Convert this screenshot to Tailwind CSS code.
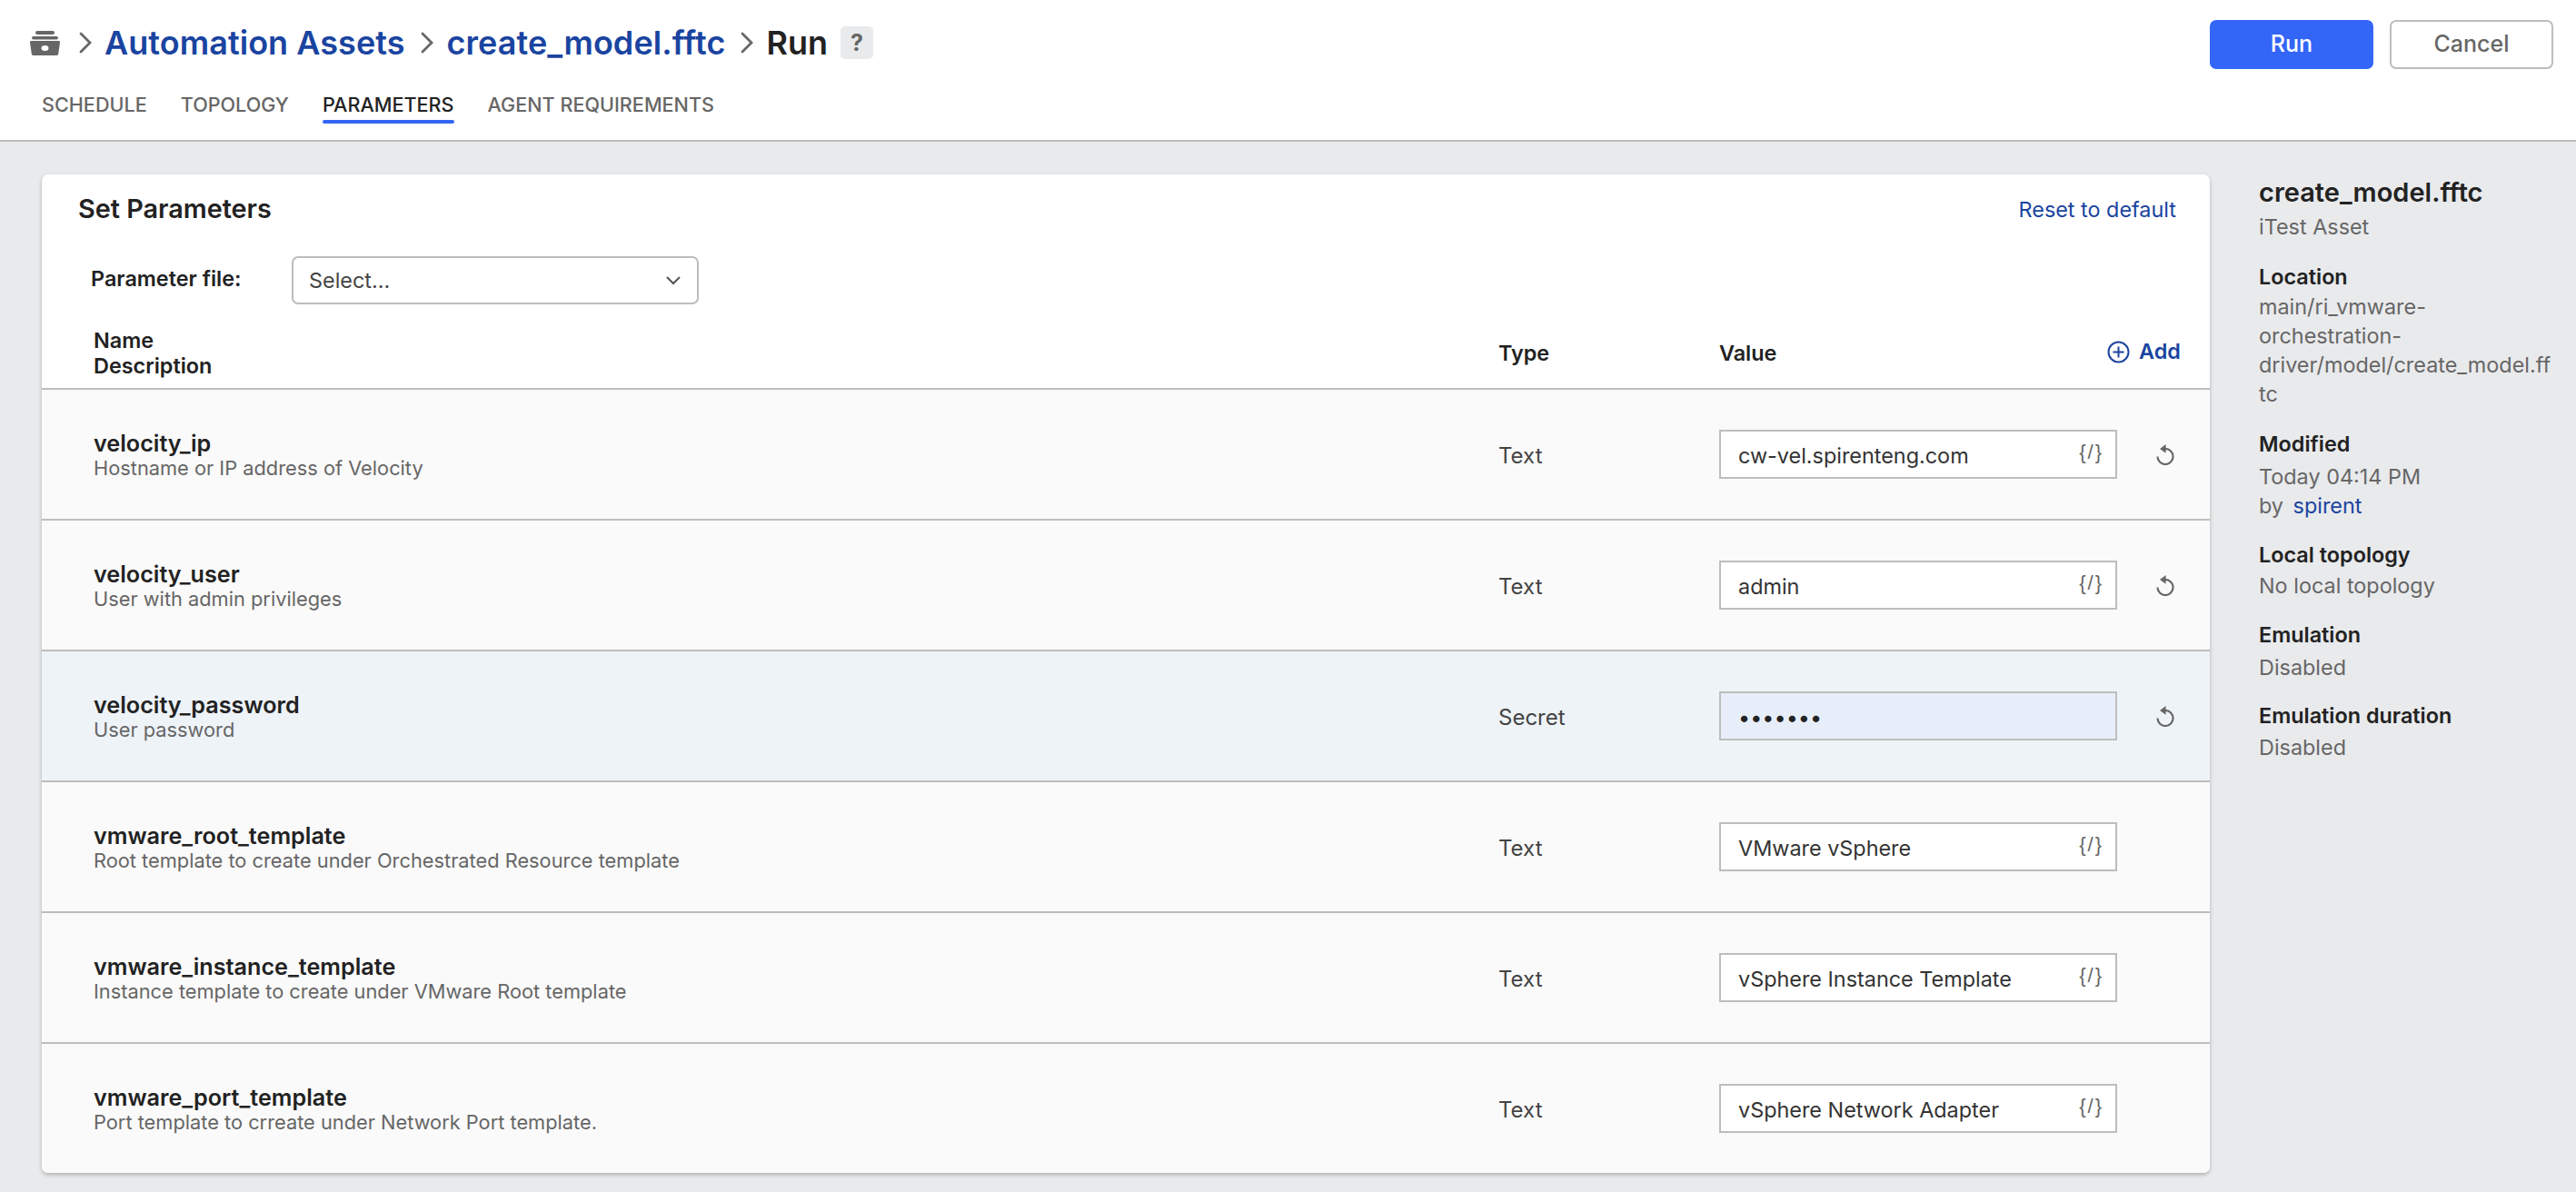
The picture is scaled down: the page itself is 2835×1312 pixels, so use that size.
<!DOCTYPE html>
<html>
<head>
<meta charset="utf-8">
<script src="https://cdn.jsdelivr.net/npm/@tailwindcss/browser@4"></script>
<title>Run</title>
</head>
<body class="bg-[#e9eaec] font-['Inter',sans-serif] text-[#222222] w-[2835px] h-[1312px] overflow-hidden">
<header class="h-[156px] bg-white border-b-2 border-[#bdbdbd] flex flex-col">
  <div class="flex items-center justify-between h-[94px] pl-[33px] pr-[25px]">
    <div class="flex items-center text-[36px] font-semibold leading-none">
      <svg class="w-[33px] h-[27px]" viewBox="0 0 33 27" fill="#666666"><rect x="6" y="0" width="21" height="4" rx="2"/><rect x="2" y="6" width="29" height="3.500" rx="1.750"/><path d="M1.500 11h30a1.500 1.500 0 0 1 1.500 1.700l-1.800 12.800a1.700 1.700 0 0 1-1.700 1.500h-26a1.700 1.700 0 0 1-1.700-1.500L0 12.700A1.500 1.500 0 0 1 1.500 11z"/><ellipse cx="16.500" cy="19" rx="4" ry="3" fill="#fff"/></svg>
      <svg class="w-[14px] h-[24px] ml-[21px] mr-[14px]" viewBox="0 0 14 24" fill="none" stroke="#666666" stroke-width="2.800" stroke-linecap="round"><path d="M2 2l10 10-10 10"/></svg>
      <a class="text-[#1a44a0] tracking-[0.05px]">Automation Assets</a>
      <svg class="w-[14px] h-[24px] ml-[17px] mr-[15px]" viewBox="0 0 14 24" fill="none" stroke="#666666" stroke-width="2.800" stroke-linecap="round"><path d="M2 2l10 10-10 10"/></svg>
      <a class="text-[#1a44a0] tracking-[0.05px]">create_model.fftc</a>
      <svg class="w-[14px] h-[24px] ml-[17px] mr-[14px]" viewBox="0 0 14 24" fill="none" stroke="#666666" stroke-width="2.800" stroke-linecap="round"><path d="M2 2l10 10-10 10"/></svg>
      <span>Run</span>
      <span class="ml-[14px] w-[36px] h-[36px] rounded-[5px] bg-[#e9eaec] text-[#666666] text-[25px] font-bold flex items-center justify-center">?</span>
    </div>
    <div class="flex items-center gap-[18px] mt-[4px]">
      <button class="w-[180px] h-[54px] rounded-[7px] bg-[#3366f6] text-white text-[25px] font-medium">Run</button>
      <button class="w-[180px] h-[54px] rounded-[7px] bg-white border-2 border-[#bdbdbd] text-[#666666] text-[25px] font-medium">Cancel</button>
    </div>
  </div>
  <nav class="flex gap-[37px] pl-[46px] pt-[7px] text-[21.6px] font-medium text-[#666666] leading-[28px]">
    <span>SCHEDULE</span>
    <span>TOPOLOGY</span>
    <span class="relative text-[#222222]">PARAMETERS<span class="absolute left-0 right-0 top-[31px] h-[4px] rounded-full bg-[#3366f6]"></span></span>
    <span>AGENT REQUIREMENTS</span>
  </nav>
</header>
<main class="flex pl-[46px] pt-[36px]">
  <section class="w-[2386px] h-[1099px] bg-white rounded-[7px] shadow-[0_2px_4px_rgba(0,0,0,0.25)] overflow-hidden flex flex-col">
    <div class="h-[235px]">
      <div class="flex items-start justify-between pl-[40px] pr-[37px] pt-[20px] h-[60px]">
        <h2 class="text-[28.8px] font-semibold leading-[36px]">Set Parameters</h2>
        <a class="text-[23.4px] text-[#1a44a0] leading-[36px] pt-[1px]">Reset to default</a>
      </div>
      <div class="flex items-center pl-[54px] mt-[30px]">
        <span class="w-[221px] text-[23.4px] font-semibold -mt-[3px]">Parameter file:</span>
        <div class="w-[448px] h-[53px] rounded-[7px] border-2 border-[#bdbdbd] flex items-center justify-between pl-[17px] pr-[18px] text-[23.4px] text-[#444444]">
          <span>Select...</span>
          <svg class="w-[16px] h-[10px]" viewBox="0 0 16 10" fill="none" stroke="#555555" stroke-width="2"><path d="M1 1l7 7 7-7"/></svg>
        </div>
      </div>
      <div class="grid grid-cols-[1603px_243px_438px_1fr] items-center mt-[26px] text-[23.4px] font-semibold leading-[28px]">
        <div class="pl-[57px]"><div>Name</div><div>Description</div></div>
        <div>Type</div>
        <div>Value</div>
        <div class="flex items-center text-[#1a44a0] font-semibold -mt-[4px]">
          <svg class="w-[25px] h-[25px] ml-[-11px] mr-[10px]" viewBox="0 0 25 25" fill="none" stroke="#1a44a0" stroke-width="2"><circle cx="12.500" cy="12.500" r="11"/><path d="M12.500 6.500v12M6.500 12.500h12"/></svg>
          Add
        </div>
      </div>
    </div>

    <div class="h-[144px] border-t-2 border-[#bdbdbd] bg-[#fafafa] grid grid-cols-[1603px_243px_438px_1fr] items-center">
      <div class="pl-[57px] mt-[4px]"><div class="text-[25.2px] font-semibold leading-[27px]">velocity_ip</div><div class="text-[21.8px] text-[#666666] leading-[27px]">Hostname or IP address of Velocity</div></div>
      <div class="text-[24px] text-[#444444] pt-[3px]">Text</div>
      <div class="h-[54px] border-2 border-[#bdbdbd] bg-white flex items-center justify-between pl-[19px] pr-[13px] text-[23.4px] text-[#333333]"><span class="pt-[3px]">cw-vel.spirenteng.com</span><span class="text-[#666666] text-[22px] tracking-[2px] font-['Liberation_Sans',sans-serif] -mt-[5px]">{/}</span></div>
      <div class="flex justify-center ml-[4px]"><svg class="w-[20px] h-[23px]" viewBox="0 0 18 21" fill="none" stroke="#666666" stroke-width="2"><path d="M9 4.500a7.800 7.800 0 1 1-7.800 7.800"/><path d="M9.500 0v9L3.500 4.500z" fill="#666666" stroke="none"/></svg></div>
    </div>
    <div class="h-[144px] border-t-2 border-[#bdbdbd] bg-[#fafafa] grid grid-cols-[1603px_243px_438px_1fr] items-center">
      <div class="pl-[57px] mt-[4px]"><div class="text-[25.2px] font-semibold leading-[27px]">velocity_user</div><div class="text-[21.8px] text-[#666666] leading-[27px]">User with admin privileges</div></div>
      <div class="text-[24px] text-[#444444] pt-[3px]">Text</div>
      <div class="h-[54px] border-2 border-[#bdbdbd] bg-white flex items-center justify-between pl-[19px] pr-[13px] text-[23.4px] text-[#333333]"><span class="pt-[3px]">admin</span><span class="text-[#666666] text-[22px] tracking-[2px] font-['Liberation_Sans',sans-serif] -mt-[5px]">{/}</span></div>
      <div class="flex justify-center ml-[4px]"><svg class="w-[20px] h-[23px]" viewBox="0 0 18 21" fill="none" stroke="#666666" stroke-width="2"><path d="M9 4.500a7.800 7.800 0 1 1-7.800 7.800"/><path d="M9.500 0v9L3.500 4.500z" fill="#666666" stroke="none"/></svg></div>
    </div>
    <div class="h-[144px] border-t-2 border-[#bdbdbd] bg-[#eef3f8] grid grid-cols-[1603px_243px_438px_1fr] items-center">
      <div class="pl-[57px] mt-[4px]"><div class="text-[25.2px] font-semibold leading-[27px]">velocity_password</div><div class="text-[21.8px] text-[#666666] leading-[27px]">User password</div></div>
      <div class="text-[24px] text-[#444444] pt-[3px]">Secret</div>
      <div class="h-[54px] border-2 border-[#bdbdbd] bg-[#e8eef9] flex items-center pl-[19px] text-[23.4px] text-[#222222]"><span class="pt-[3px]">•••••••</span></div>
      <div class="flex justify-center ml-[4px]"><svg class="w-[20px] h-[23px]" viewBox="0 0 18 21" fill="none" stroke="#666666" stroke-width="2"><path d="M9 4.500a7.800 7.800 0 1 1-7.800 7.800"/><path d="M9.500 0v9L3.500 4.500z" fill="#666666" stroke="none"/></svg></div>
    </div>
    <div class="h-[144px] border-t-2 border-[#bdbdbd] bg-[#fafafa] grid grid-cols-[1603px_243px_438px_1fr] items-center">
      <div class="pl-[57px] mt-[4px]"><div class="text-[25.2px] font-semibold leading-[27px]">vmware_root_template</div><div class="text-[21.8px] text-[#666666] leading-[27px]">Root template to create under Orchestrated Resource template</div></div>
      <div class="text-[24px] text-[#444444] pt-[3px]">Text</div>
      <div class="h-[54px] border-2 border-[#bdbdbd] bg-white flex items-center justify-between pl-[19px] pr-[13px] text-[23.4px] text-[#333333]"><span class="pt-[3px]">VMware vSphere</span><span class="text-[#666666] text-[22px] tracking-[2px] font-['Liberation_Sans',sans-serif] -mt-[5px]">{/}</span></div>
      <div></div>
    </div>
    <div class="h-[144px] border-t-2 border-[#bdbdbd] bg-[#fafafa] grid grid-cols-[1603px_243px_438px_1fr] items-center">
      <div class="pl-[57px] mt-[4px]"><div class="text-[25.2px] font-semibold leading-[27px]">vmware_instance_template</div><div class="text-[21.8px] text-[#666666] leading-[27px]">Instance template to create under VMware Root template</div></div>
      <div class="text-[24px] text-[#444444] pt-[3px]">Text</div>
      <div class="h-[54px] border-2 border-[#bdbdbd] bg-white flex items-center justify-between pl-[19px] pr-[13px] text-[23.4px] text-[#333333]"><span class="pt-[3px]">vSphere Instance Template</span><span class="text-[#666666] text-[22px] tracking-[2px] font-['Liberation_Sans',sans-serif] -mt-[5px]">{/}</span></div>
      <div></div>
    </div>
    <div class="h-[144px] border-t-2 border-[#bdbdbd] bg-[#fafafa] grid grid-cols-[1603px_243px_438px_1fr] items-center">
      <div class="pl-[57px] mt-[4px]"><div class="text-[25.2px] font-semibold leading-[27px]">vmware_port_template</div><div class="text-[21.8px] text-[#666666] leading-[27px]">Port template to crreate under Network Port template.</div></div>
      <div class="text-[24px] text-[#444444] pt-[3px]">Text</div>
      <div class="h-[54px] border-2 border-[#bdbdbd] bg-white flex items-center justify-between pl-[19px] pr-[13px] text-[23.4px] text-[#333333]"><span class="pt-[3px]">vSphere Network Adapter</span><span class="text-[#666666] text-[22px] tracking-[2px] font-['Liberation_Sans',sans-serif] -mt-[5px]">{/}</span></div>
      <div></div>
    </div>
  </section>

  <aside class="w-[324px] ml-[54px] text-[23.4px] leading-[32px] text-[#666666] [overflow-wrap:anywhere]">
    <h3 class="text-[29px] font-semibold text-[#222222] leading-[38px] mt-[1px]">create_model.fftc</h3>
    <div class="mt-[3px]">iTest Asset</div>
    <div class="mt-[23px] font-semibold text-[#222222]">Location</div>
    <div class="mt-[1px]">main/ri_vmware-orchestration-driver/model/create_model.fftc</div>
    <div class="mt-[23px] font-semibold text-[#222222]">Modified</div>
    <div class="mt-[4px]">Today 04:14 PM</div>
    <div>by <a class="text-[#1a44a0] ml-[4px]">spirent</a></div>
    <div class="mt-[22px] font-semibold text-[#222222]">Local topology</div>
    <div class="mt-[2px]">No local topology</div>
    <div class="mt-[22px] font-semibold text-[#222222]">Emulation</div>
    <div class="mt-[4px]">Disabled</div>
    <div class="mt-[21px] font-semibold text-[#222222]">Emulation duration</div>
    <div class="mt-[3px]">Disabled</div>
  </aside>
</main>
</body>
</html>
